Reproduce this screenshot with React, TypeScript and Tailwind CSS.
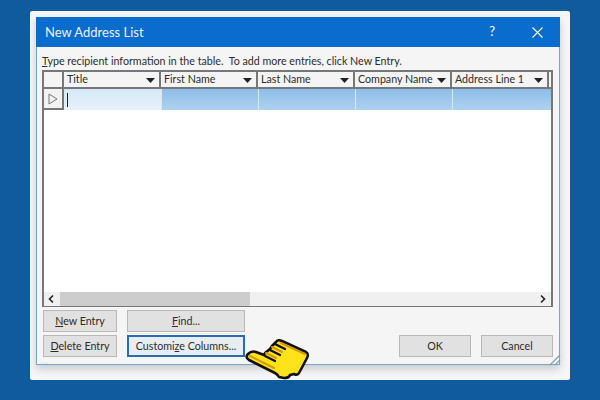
const columns = ["Title", "First Name", "Last Name", "Company Name", "Address Line 1"];

function HeaderCell({ label }: { label: string }) {
  return (
    <div className="flex w-[97px] shrink-0 items-center justify-between whitespace-nowrap border-r-2 border-[#77777a] pl-[3px] pr-[4px]">
      <span className="-mt-[1px] text-[#2c2c2c]">{label}</span>
      <svg width="9" height="5" viewBox="0 0 9 5" className="mt-[2px] shrink-0">
        <path d="M0 0H9L4.5 5Z" fill="#222" />
      </svg>
    </div>
  );
}

function DialogButton({ children, w, focus }: { children: React.ReactNode; w: string; focus?: boolean }) {
  return (
    <div
      className={`flex h-[22px] items-center justify-center whitespace-nowrap text-[#2c2c2c] ${w} ${
        focus ? "border-2 border-[#2a6cb0] bg-[#e8edf2]" : "border border-[#b8b8b8] bg-[#e1e1e1]"
      }`}
    >
      {children}
    </div>
  );
}

function Hand() {
  return (
    <svg width="66" height="46" viewBox="0 0 66 46" className="absolute left-[245px] top-[337px]">
      <path
        d="M3 17 C5 15 8 14 11 15 L19 18 L20 16 L25 12 L27 9 L31 5 C32 3 35 3 37 4 L61 15 C64 17 63 19 62 21 L54 36 C53 38 51 38 49 37 L45 38 C44 41 41 41 39 41 L34 40 C33 38 32 37 30 36 L4 23 C1 21 1 19 3 17Z"
        fill="#ffe21a"
        stroke="#111"
        strokeWidth="2.6"
        strokeLinejoin="round"
      />
      <path d="M20 19 L30 24 M25 13 L35 18 M30 7 L40 12" stroke="#111" strokeWidth="2.2" strokeLinecap="round" />
      <path d="M5 19 L29 31 M21 16 L31 21 M27 10 L37 15 M36 6 L60 17" stroke="#d09a0a" strokeWidth="2" strokeLinecap="round" />
    </svg>
  );
}

export default function App() {
  return (
    <div className="relative h-[400px] w-[600px] overflow-hidden bg-[#0f5b9d] pl-[30px] pt-[11px] font-['Lato',sans-serif] text-[10.7px]">
      <div className="h-[369px] w-[540px] rounded-[2px] bg-[#f4f6f7] pl-[6px] pt-[6px]">
        <div className="flex h-[348px] w-[524px] flex-col border border-[#7ba4cb] bg-[#f5f5f5] shadow-[0_4px_8px_rgba(0,0,0,0.18)]">
          <div className="-mx-px -mt-px flex h-[30px] shrink-0 items-center justify-between bg-[#0a6ccd] pl-[9px] pr-[17px] text-white">
            <span className="pt-[1px] text-[13px] text-[#e6f1fb]">New Address List</span>
            <div className="flex items-center gap-[37px]">
              <span className="text-[13px]">?</span>
              <svg width="11" height="11" viewBox="0 0 11 11">
                <path d="M0.5 0.5L10.5 10.5M10.5 0.5L0.5 10.5" stroke="#fff" strokeWidth="1.1" />
              </svg>
            </div>
          </div>

          <div className="flex flex-1 flex-col px-[5px]">
            <p className="h-[23px] whitespace-nowrap pt-[5px] leading-[18px] text-[#2c2c2c]">
              <span className="underline">T</span>ype recipient information in the table.&nbsp; To add more entries, click New Entry.
            </p>

            <div className="flex h-[237px] w-[511px] flex-col border-2 border-b-[1.5px] border-[#77777a] bg-white">
              <div className="flex h-[17px] shrink-0 border-b-2 border-[#77777a] bg-[#f4f4f4]">
                <div className="w-[20px] shrink-0 border-r-2 border-[#77777a]" />
                {columns.map((c) => (
                  <HeaderCell key={c} label={c} />
                ))}
              </div>
              <div className="flex h-[21px] shrink-0">
                <div className="flex w-[20px] shrink-0 items-center justify-center border-b-2 border-r-2 border-[#77777a] bg-[#f2f2f2]">
                  <svg width="10" height="12" viewBox="0 0 10 12">
                    <path d="M1 1L9 6L1 11Z" fill="none" stroke="#777" />
                  </svg>
                </div>
                <div className="flex w-[97px] shrink-0 items-center bg-gradient-to-b from-[#d6e8f7] to-[#e6f1fa] pl-[3px]">
                  <div className="h-[14px] w-px bg-[#222]" />
                </div>
                {[0, 1, 2, 3].map((i) => (
                  <div key={i} className="w-[97px] shrink-0 border-l border-[#d8e8f6] bg-gradient-to-b from-[#8dbde8] to-[#aed2f0]" />
                ))}
                <div className="flex-1 bg-gradient-to-b from-[#8dbde8] to-[#aed2f0]" />
              </div>
              <div className="flex-1" />
              <div className="flex h-[14px] shrink-0 items-center bg-[#f0f0f0]">
                <svg width="16" height="10" viewBox="0 0 16 10" className="shrink-0">
                  <path d="M9 1.5L5.5 5L9 8.5" fill="none" stroke="#222" strokeWidth="1.6" />
                </svg>
                <div className="h-full w-[190px] bg-[#cdcdcd]" />
                <div className="flex-1" />
                <svg width="16" height="10" viewBox="0 0 16 10" className="shrink-0">
                  <path d="M6 1.5L9.5 5L6 8.5" fill="none" stroke="#222" strokeWidth="1.6" />
                </svg>
              </div>
            </div>

            <div className="mt-[3px] flex pl-px">
              <div className="flex flex-col gap-[3px]">
                <DialogButton w="w-[74px]">
                  <span>
                    <span className="underline">N</span>ew Entry
                  </span>
                </DialogButton>
                <DialogButton w="w-[74px]">
                  <span>
                    <span className="underline">D</span>elete Entry
                  </span>
                </DialogButton>
              </div>
              <div className="ml-[10px] flex flex-col gap-[3px]">
                <DialogButton w="w-[118px]">
                  <span>
                    <span className="underline">F</span>ind...
                  </span>
                </DialogButton>
                <DialogButton w="w-[118px]" focus>
                  <span>
                    Customi<span className="underline">z</span>e Columns...
                  </span>
                </DialogButton>
              </div>
              <div className="ml-auto mr-[1px] flex items-end gap-[10px]">
                <DialogButton w="w-[72px]">OK</DialogButton>
                <DialogButton w="w-[72px]">Cancel</DialogButton>
              </div>
            </div>
          </div>
        </div>
      </div>
      <svg width="12" height="12" viewBox="0 0 12 12" className="absolute left-[549px] top-[354px]">
        <path d="M1 11L11 1M6 11L11 6" stroke="#7a9cc0" strokeWidth="1.2" />
      </svg>
      <Hand />
    </div>
  );
}
